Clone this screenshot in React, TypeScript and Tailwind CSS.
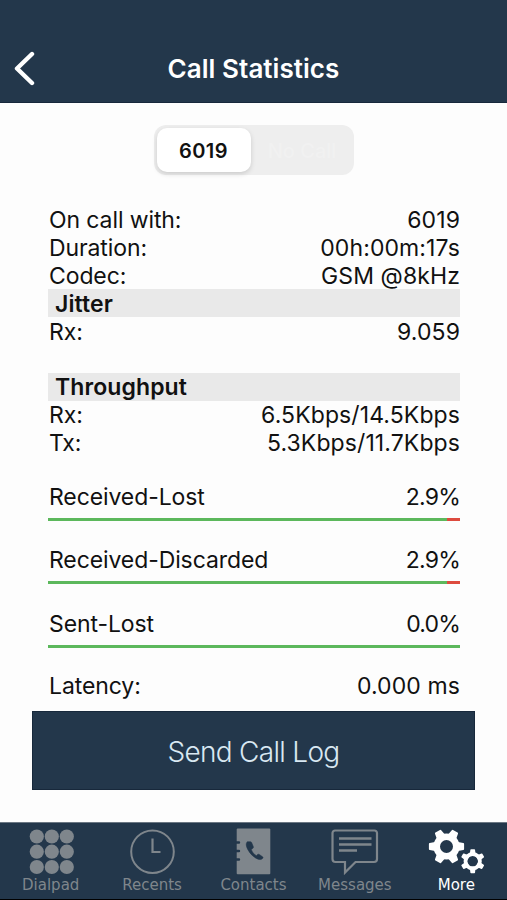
import { useState } from "react";

const usage = [
  { label: "Received-Lost", value: "2.9%", lost: 2.9 },
  { label: "Received-Discarded", value: "2.9%", lost: 2.9 },
  { label: "Sent-Lost", value: "0.0%", lost: 0 },
];

const TEETH = [0, 60, 120, 180, 240, 300];

function Row({ label, value, tight = false }: { label: string; value: string; tight?: boolean }) {
  return (
    <div className="flex h-[27.8px] items-center justify-between pt-[2px] pl-px">
      <span>{label}</span>
      <span className={tight ? "tracking-[-0.8px]" : "tracking-[0.1px]"}>{value}</span>
    </div>
  );
}

function Heading({ text }: { text: string }) {
  return (
    <h2 className="flex h-[27.8px] items-center bg-[#e9e9e9] pt-[2px] pl-[7px] text-[23px] font-semibold tracking-[0.1px]">
      {text}
    </h2>
  );
}

function LossBar({ label, value, lost }: { label: string; value: string; lost: number }) {
  return (
    <div className="h-[63.5px]">
      <Row label={label} value={value} tight />
      <div className="mt-[8px] flex h-[3px] bg-[#5cb85c]">
        <div className="ml-auto bg-[#dd4b3e]" style={{ width: `${lost * 1.1}%` }} />
      </div>
    </div>
  );
}

function DialpadIcon() {
  return (
    <svg width="50" height="48" viewBox="0 0 50 48" fill="currentColor">
      {[10.8, 25.8, 40.8].map((x) =>
        [8.5, 23.7, 39].map((y) => <circle key={`${x}-${y}`} cx={x} cy={y} r="7.1" />)
      )}
    </svg>
  );
}

function ClockIcon() {
  return (
    <svg width="50" height="48" viewBox="0 0 50 48" fill="none" stroke="currentColor" strokeWidth="2">
      <circle cx="25.5" cy="23.7" r="21.3" />
      <path d="M25.5 10.5v13.5H33.5" strokeWidth="2.2" />
    </svg>
  );
}

function ContactsIcon() {
  return (
    <svg width="50" height="48" viewBox="0 0 50 48">
      <rect x="8.7" y="0.5" width="33.6" height="45.7" rx="1" fill="currentColor" />
      <g stroke="#23374b" strokeWidth="2.4" strokeLinecap="round">
        <path d="M8 14.5h3M8 23h3M8 31.5h3" />
      </g>
      <path
        d="M19.3 13.7c-1.7 1.5-1.4 4.5.7 8.2 2.5 4.4 6 7.6 9.6 9.1 2.3 1 4 .6 5.2-.8.4-.5.3-1-.2-1.4l-3.3-2.4c-.6-.4-1.3-.3-1.8.2l-1.2 1.1c-2.2-1.3-4.1-3.700-5-6.200l1.600-1.200c.5-.4.700-1 .4-1.700l-1.700-4.200c-.3-.7-1-.9-1.700-.7z"
        fill="#23374b"
        stroke="#23374b"
        strokeWidth="0.5"
      />
    </svg>
  );
}

function MessagesIcon() {
  return (
    <svg width="50" height="48" viewBox="0 0 50 48" fill="none" stroke="currentColor">
      <path
        d="M5 2.5h39.5a2.5 2.5 0 0 1 2.5 2.5v26a3 3 0 0 1-3 3H25.5L15 44.5v-10.5H5.5a3 3 0 0 1-3-3V5a2.5 2.5 0 0 1 2.5-2.5z"
        strokeWidth="2.2"
      />
      <path d="M9 10.5h32.5M9 16.5h32.5M9 22.5h18" strokeWidth="2.4" />
    </svg>
  );
}

function GearsIcon() {
  return (
    <svg width="60" height="48" viewBox="0 0 60 48">
      <g transform="translate(20.5 18.5)" fill="white" stroke="white" strokeLinejoin="round">
        {TEETH.map((a) => (
          <path key={a} d="M10 -3.8L16.6 -2.6V2.6L10 3.8z" strokeWidth="2" transform={`rotate(${a})`} />
        ))}
        <circle r="9.8" fill="none" strokeWidth="6.6" />
      </g>
      <g transform="translate(46.7 33.2)" fill="white" stroke="white" strokeLinejoin="round">
        {TEETH.map((a) => (
          <path key={a} d="M6 -2.2L11.3 -1.6V1.6L6 2.2z" strokeWidth="1.5" transform={`rotate(${a + 30})`} />
        ))}
        <circle r="7.2" fill="none" strokeWidth="3.8" />
      </g>
    </svg>
  );
}

const tabs = [
  { name: "Dialpad", Icon: DialpadIcon },
  { name: "Recents", Icon: ClockIcon },
  { name: "Contacts", Icon: ContactsIcon },
  { name: "Messages", Icon: MessagesIcon },
  { name: "More", Icon: GearsIcon },
];

export default function App() {
  const [tab, setTab] = useState("More");

  return (
    <div className="flex h-[900px] w-[507px] flex-col overflow-hidden bg-[#fdfdfd] font-[Inter,sans-serif] text-[#111]">
      <header className="grid h-[102.5px] shrink-0 grid-cols-[60px_1fr_60px] items-center border-b border-[#17283b] bg-[#23374b] pt-[35px] text-white">
        <button type="button" aria-label="Back" className="pl-[14px]">
          <svg width="22" height="36" viewBox="0 0 22 36" fill="none" stroke="white" strokeWidth="4.4" strokeLinecap="round" strokeLinejoin="round">
            <path d="M18 4L3 18.5l15 14.5" />
          </svg>
        </button>
        <h1 className="pt-px text-center text-[26px] font-semibold tracking-[0.05px]">Call Statistics</h1>
      </header>

      <div className="mx-auto mt-[22.5px] grid h-[50px] w-[200px] shrink-0 grid-cols-2 rounded-[12px] bg-[#eeeeee] p-[3px]">
        <button type="button" className="mr-[3px] rounded-[10px] bg-white pt-px text-[20px] font-semibold tracking-[0.5px] shadow-[0_2px_5px_rgba(0,0,0,0.15)]">
          6019
        </button>
        <button type="button" className="pt-px text-[20px] font-medium text-[#f1f1f1]">No Call</button>
      </div>

      <main className="mr-[47px] ml-[48px] mt-[31px] text-[23px] leading-none tracking-[-0.1px]">
        <Row label="On call with:" value="6019" />
        <Row label="Duration:" value="00h:00m:17s" />
        <Row label="Codec:" value="GSM @8kHz" />
        <Heading text="Jitter" />
        <Row label="Rx:" value="9.059" />
        <div className="mt-[27.8px]">
          <Heading text="Throughput" />
          <Row label="Rx:" value="6.5Kbps/14.5Kbps" />
          <Row label="Tx:" value="5.3Kbps/11.7Kbps" />
        </div>
        <div className="mt-[26px]">
          {usage.map((u) => (
            <LossBar key={u.label} {...u} />
          ))}
        </div>
        <div className="-mt-px">
          <Row label="Latency:" value="0.000 ms" />
        </div>
      </main>

      <button
        type="button"
        className="mx-[32px] mt-auto mb-[31.5px] h-[79px] shrink-0 border border-[#17283b] bg-[#23374b] pt-[2px] text-[28px] font-light tracking-[-0.7px] text-[#d9e8f2]"
      >
        Send Call Log
      </button>

      <nav className="grid h-[78.5px] shrink-0 grid-cols-5 border-t border-b border-t-[#6b7783] border-b-black bg-[#23374b] pt-[5px]">
        {tabs.map(({ name, Icon }) => (
          <button
            key={name}
            type="button"
            onClick={() => setTab(name)}
            className={`flex flex-col items-center font-['DejaVu_Sans',sans-serif] text-[15px] leading-[19px] ${
              tab === name ? "text-white" : "text-[#7f868c]"
            }`}
          >
            <Icon />
            <span>{name}</span>
          </button>
        ))}
      </nav>
    </div>
  );
}
